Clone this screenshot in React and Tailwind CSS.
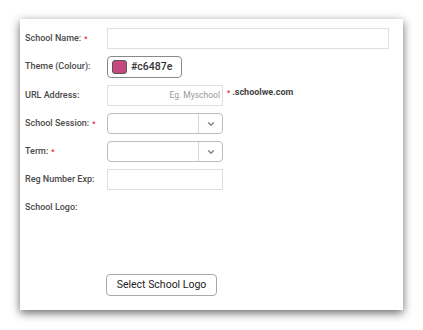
import { ChevronDown } from "lucide-react"

const Req = () => <span className="ml-[3px] text-[7px] font-bold text-[#ee2b2b]">*</span>

const Row = ({ label, required, children }) => (
  <div className="flex h-[21px] items-center">
    <div className="w-[82px] shrink-0 text-[9px] font-medium text-[#4a4a4a]">
      {label}
      {required && <Req />}
    </div>
    {children}
  </div>
)

const Select = () => (
  <div className="flex h-[21px] w-[116px] items-center rounded-[4px] border border-[#bdbdbd] bg-white">
    <div className="flex-1" />
    <div className="flex h-full w-[24px] items-center justify-center border-l border-[#d6d6d6]">
      <ChevronDown size={10} strokeWidth={3.5} className="text-[#8a8a8a]" />
    </div>
  </div>
)

export default function App() {
  return (
    <div className="h-[330px] w-[423px] bg-white pl-[20px] pt-[19px] font-['Roboto','Liberation_Sans',Arial,sans-serif]">
      <div className="flex h-[291px] w-[383px] flex-col bg-white pb-[14px] pl-[5px] pr-[14px] pt-[9px] shadow-[0_3px_9px_rgba(0,0,0,0.6)]">
        <div className="flex flex-col gap-[7px]">
          <Row label="School Name:" required>
            <div className="h-[21px] flex-1 border border-[#dedede] bg-white" />
          </Row>
          <div className="flex h-[22px] items-center">
            <div className="w-[82px] shrink-0 text-[9px] font-medium text-[#4a4a4a]">Theme (Colour):</div>
            <div className="flex h-[22px] w-[75px] items-center gap-[4px] rounded-[4px] border border-[#8a8a8a] bg-white pl-[4px]">
              <div className="h-[14px] w-[15px] rounded-[3px] border border-[#555] bg-[#c6487e]" />
              <span className="text-[10.5px] font-medium text-[#333]">#c6487e</span>
            </div>
          </div>
          <Row label="URL Address:">
            <div className="flex h-[21px] w-[116px] items-center justify-end border border-[#dedede] bg-white pr-[2px] text-[8.5px] text-[#9a9a9a]">
              Eg. Myschool
            </div>
            <div className="ml-[4px] flex items-baseline self-start pt-[1px]">
              <span className="text-[7px] font-bold text-[#ee2b2b]">*</span>
              <span className="ml-[2px] text-[9px] font-bold text-[#444]">.schoolwe.com</span>
            </div>
          </Row>
          <Row label="School Session:" required>
            <Select />
          </Row>
          <Row label="Term:" required>
            <Select />
          </Row>
          <Row label="Reg Number Exp:">
            <div className="h-[21px] w-[116px] border border-[#dedede] bg-white" />
          </Row>
          <Row label="School Logo:" />
        </div>
        <div className="mt-auto pl-[81px]">
          <button className="h-[22px] w-[111px] rounded-[4px] border border-[#a8a8a8] bg-white text-[10.5px] text-[#222]">
            Select School Logo
          </button>
        </div>
      </div>
    </div>
  )
}
